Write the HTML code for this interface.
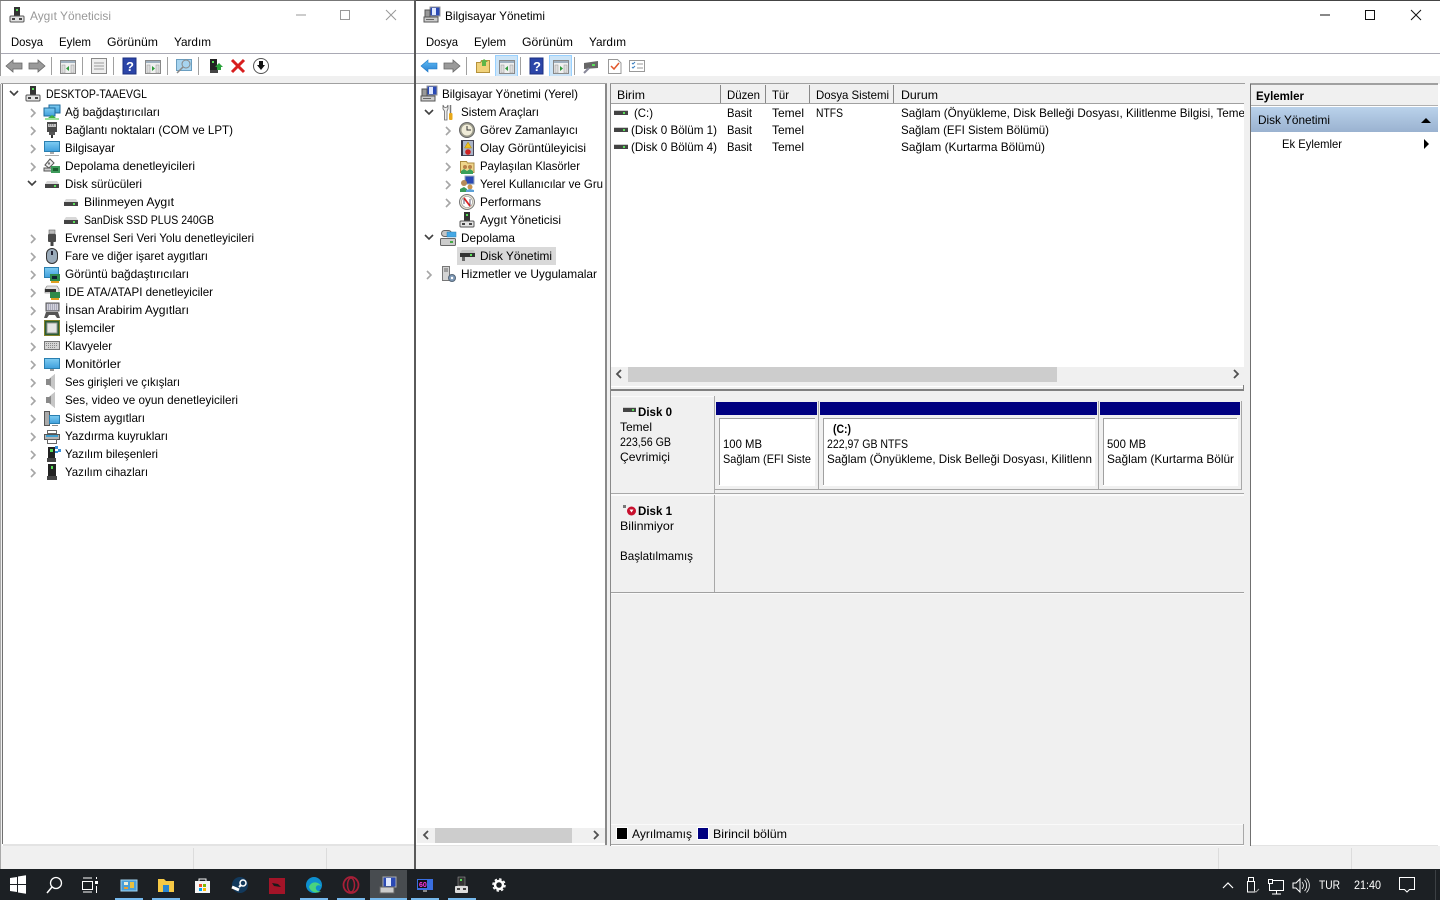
<!DOCTYPE html>
<html lang="tr"><head><meta charset="utf-8"><title>Bilgisayar Yönetimi</title>
<style>
html,body{margin:0;padding:0;background:#fff;overflow:hidden}
svg{display:block}
text{font-family:"Liberation Sans","DejaVu Sans",sans-serif;font-size:12px;fill:#000;white-space:pre}
.b{font-weight:bold}
</style></head><body>
<svg width="1440" height="900" viewBox="0 0 1440 900" xmlns="http://www.w3.org/2000/svg">
<defs>
<linearGradient id="ga" x1="0" y1="0" x2="0" y2="1"><stop offset="0" stop-color="#bad2eb"/><stop offset="1" stop-color="#9ab2d0"/></linearGradient>
<linearGradient id="gb" x1="0" y1="0" x2="0" y2="1"><stop offset="0" stop-color="#5fbdf5"/><stop offset="1" stop-color="#2a7fd0"/></linearGradient>
<linearGradient id="gm" x1="0" y1="0" x2="0" y2="1"><stop offset="0" stop-color="#7fcdf2"/><stop offset="1" stop-color="#3f9fdc"/></linearGradient>
<g id="ch"><path d="M0 0l4 4-4 4" fill="none" stroke="#a6a6a6" stroke-width="1.600"/></g>
<g id="ex"><path d="M0 0l4 4 4-4" fill="none" stroke="#404040" stroke-width="1.600"/></g>
<g id="dev"><rect x="5" y="0" width="6" height="9" fill="#333"/><rect x="7" y="2" width="2" height="2" fill="#5d5"/><rect x="1" y="9" width="14" height="6" rx="1" fill="#e2e2e2" stroke="#555"/><rect x="3" y="11" width="3" height="2" fill="#444"/><rect x="10" y="11" width="3" height="2" fill="#444"/></g>
<g id="comp"><rect x="6" y="0" width="10" height="9" fill="#2a49b5" stroke="#999"/><rect x="8" y="1" width="4" height="7" fill="#dfe8ff"/><rect x="1" y="3" width="5" height="7" fill="#999" stroke="#555"/><rect x="0" y="10" width="14" height="5" fill="#ccc" stroke="#555"/><rect x="2" y="12" width="8" height="1" fill="#666"/></g>
<g id="net"><rect x="5" y="0" width="11" height="8" fill="url(#gm)" stroke="#1e6a9c"/><rect x="0" y="3" width="11" height="8" fill="url(#gm)" stroke="#1e6a9c"/><rect x="1" y="13" width="14" height="2" fill="#9be09b"/><path d="M8 10l-4 3h8z" fill="#3fb23f"/></g>
<g id="port"><rect x="3" y="0" width="10" height="10" fill="#4a4a4a"/><rect x="4" y="2" width="8" height="3" fill="#c4c4c4"/><path d="M5 3h6" stroke="#666" stroke-dasharray="1 1"/><rect x="5" y="10" width="6" height="3" fill="#555"/><rect x="7" y="13" width="2" height="3" fill="#333"/></g>
<g id="pc"><rect x=".5" y=".5" width="15" height="10" fill="url(#gm)" stroke="#2a7fb0"/><rect x="6" y="11" width="4" height="2" fill="#aaa"/><rect x="1" y="14" width="14" height="1" fill="#aaa"/></g>
<g id="stor"><path d="M1 7l5-6 4 4-5 5z" fill="#f0f0f0" stroke="#555"/><circle cx="5" cy="5.500" r="1.200" fill="#777"/><rect x="0" y="10" width="8" height="3" fill="#ccc" stroke="#555"/><rect x="7" y="8" width="9" height="7" fill="#3d9a5a"/><rect x="9" y="10" width="5" height="3" fill="#1b5e30"/></g>
<g id="disk"><path d="M1 8l2-3h10l2 3z" fill="#d8d8d8"/><rect x="1" y="8" width="14" height="4" fill="#444"/><rect x="10" y="9" width="2" height="2" fill="#5be05b"/></g>
<g id="usb"><rect x="5" y="0" width="6" height="4" fill="#bbb" stroke="#666" stroke-width=".6"/><rect x="4" y="4" width="8" height="8" rx="1" fill="#4a4a4a"/><rect x="6.500" y="12" width="3" height="4" fill="#444"/></g>
<g id="mouse"><rect x="2.500" y=".5" width="11" height="15" rx="5.500" fill="#9aabba" stroke="#333"/><rect x="7" y="3" width="2" height="4" fill="#223"/></g>
<g id="gpu"><rect x=".5" y=".5" width="14" height="10" fill="url(#gm)" stroke="#2a7fb0"/><rect x="6" y="7" width="10" height="7" fill="#2f8a4a"/><rect x="8" y="9" width="5" height="3" fill="#123"/><rect x="7" y="14" width="8" height="2" fill="#e0a020"/></g>
<g id="ide"><path d="M1 5l2-3h10l2 3v4H1z" fill="#e2e2e2" stroke="#777" stroke-width=".6"/><rect x="1" y="5" width="11" height="3" fill="#333"/><rect x="6" y="8" width="10" height="6" fill="#2f8a4a"/><rect x="7" y="14" width="8" height="2" fill="#e0a020"/></g>
<g id="hid"><rect x="2" y="0" width="13" height="8" fill="#aab" stroke="#555"/><path d="M3 2h11M3 4h11M3 6h11" stroke="#fff" stroke-dasharray="1 1"/><path d="M0 15l2-6h12l2 6h-3l-2-3H5l-2 3z" fill="#555"/></g>
<g id="cpu"><rect x="0" y="0" width="16" height="16" fill="#2c5d34"/><rect x=".5" y=".5" width="15" height="15" fill="none" stroke="#d9a520" stroke-dasharray="1 1"/><rect x="3" y="3" width="10" height="10" fill="#e5e5e5" stroke="#999"/></g>
<g id="kb"><rect x=".5" y="3.500" width="15" height="8" fill="#d4d4d4" stroke="#777"/><path d="M2 5.500h12M2 7.500h12M4 9.500h8" stroke="#888" stroke-dasharray="1 1"/></g>
<g id="mon"><rect x=".5" y=".5" width="15" height="10" fill="url(#gm)" stroke="#2a7fb0"/><rect x="6" y="11" width="4" height="2" fill="#999"/></g>
<g id="spk"><path d="M2 5h3l6-5v16l-6-5H2z" fill="#8a8a8a"/><path d="M7 3l4-3v16l-4-3z" fill="#c6c6c6"/></g>
<g id="sys"><rect x=".5" y=".5" width="5" height="14" fill="#aaa" stroke="#555"/><rect x="5.500" y="4.500" width="10" height="8" fill="url(#gm)" stroke="#2a7fb0"/><rect x="8" y="14" width="6" height="1" fill="#888"/></g>
<g id="prn"><rect x="3.500" y="1.500" width="9" height="3" fill="#fff" stroke="#666"/><rect x=".5" y="5.500" width="15" height="5" fill="#b5b5b5" stroke="#555"/><rect x="3.500" y="10.500" width="9" height="4" fill="#fff" stroke="#666"/><rect x="2" y="6" width="12" height="2" fill="#40a0d0"/></g>
<g id="sw"><rect x="3" y="1" width="7" height="11" fill="#222"/><rect x="5" y="3" width="3" height="3" fill="#5d5"/><rect x="2" y="12" width="9" height="4" fill="#444"/><rect x="10" y="0" width="3" height="3" fill="#3a8fd8"/><rect x="13" y="3" width="3" height="3" fill="#3a8fd8"/><rect x="10" y="5" width="3" height="2" fill="#3a8fd8"/></g>
<g id="swd"><rect x="4" y="0" width="8" height="12" fill="#222"/><rect x="7" y="2" width="2" height="3" fill="#5d5"/><rect x="3" y="12" width="10" height="4" fill="#444"/></g>
<g id="back"><path d="M0 7l7-6v3h9v6H7v3z" fill="#9a9a9a" stroke="#666" stroke-width=".8"/></g>
<g id="fwd"><path d="M16 7l-7-6v3H0v6h9v3z" fill="#9a9a9a" stroke="#666" stroke-width=".8"/></g>
<g id="win1"><rect x=".5" y=".5" width="15" height="13" fill="#f0f0f0" stroke="#888"/><rect x="1" y="1" width="14" height="2" fill="#9fb0bf"/><rect x="2" y="5" width="3" height="8" fill="#ddd" stroke="#999" stroke-width=".5"/><rect x="11" y="5" width="3" height="8" fill="#ddd" stroke="#999" stroke-width=".5"/><path d="M9 6v5L6 8.500z" fill="#2e9a3a"/></g>
<g id="win2"><rect x=".5" y=".5" width="15" height="13" fill="#f0f0f0" stroke="#888"/><rect x="1" y="1" width="14" height="2" fill="#9fb0bf"/><rect x="2" y="5" width="3" height="8" fill="#ddd" stroke="#999" stroke-width=".5"/><rect x="11" y="5" width="3" height="8" fill="#ddd" stroke="#999" stroke-width=".5"/><path d="M7 6v5l3-2.500z" fill="#2e9a3a"/></g>
<g id="help"><rect x="0" y="0" width="13" height="16" fill="#2b45a8" stroke="#1b2f80"/><text x="3" y="13" style="font-size:13px;font-weight:bold;fill:#fff">?</text></g>
<g id="sb"><path d="M0 0l4 4-4 4" fill="none" stroke="#505050" stroke-width="1.800"/></g>
<g id="sbl"><path d="M4 0L0 4l4 4" fill="none" stroke="#505050" stroke-width="1.800"/></g>
</defs>

<rect width="1440" height="900" fill="#fff"/>

<!-- LEFT WINDOW -->
<rect x="0" y="0" width="414" height="869" fill="#fff"/>
<rect x="0" y="0" width="1" height="869" fill="#999"/>
<rect x="0" y="0" width="414" height="1" fill="#777"/>
<use href="#dev" x="9" y="7"/>
<text x="30" y="20" style="fill:#999" textLength="81" lengthAdjust="spacingAndGlyphs">Aygıt Yöneticisi</text>
<path d="M296 15h10" stroke="#999"/><rect x="340.500" y="10.500" width="9" height="9" fill="none" stroke="#999"/><path d="M386 10l10 10M396 10l-10 10" stroke="#999"/>
<text x="11" y="46" textLength="32" lengthAdjust="spacingAndGlyphs">Dosya</text>
<text x="59" y="46" textLength="32" lengthAdjust="spacingAndGlyphs">Eylem</text>
<text x="107" y="46" textLength="51" lengthAdjust="spacingAndGlyphs">Görünüm</text>
<text x="174" y="46" textLength="37" lengthAdjust="spacingAndGlyphs">Yardım</text>
<rect x="1" y="53" width="413" height="1" fill="#a9a9b4"/>
<use href="#back" x="6" y="59"/><use href="#fwd" x="29" y="59"/>
<rect x="51" y="57" width="1" height="18" fill="#a0a0a0"/>
<use href="#win1" x="60" y="60"/>
<rect x="82" y="57" width="1" height="18" fill="#a0a0a0"/>
<rect x="91.500" y="58.500" width="15" height="15" fill="#eee" stroke="#888"/><path d="M94 63h10M94 66h10M94 69h10" stroke="#999"/>
<rect x="113" y="57" width="1" height="18" fill="#a0a0a0"/>
<use href="#help" x="123" y="58"/>
<use href="#win2" x="145" y="60"/>
<rect x="167" y="57" width="1" height="18" fill="#a0a0a0"/>
<rect x="176.500" y="59.500" width="15" height="11" fill="#a7d4ef" stroke="#6a9ec0"/><circle cx="186" cy="64" r="4" fill="none" stroke="#888"/><path d="M183 67l-6 6" stroke="#888" stroke-width="1.500"/>
<rect x="198" y="57" width="1" height="18" fill="#a0a0a0"/>
<rect x="210" y="59" width="7" height="11" fill="#222"/><rect x="212" y="61" width="2" height="2" fill="#5d5"/><rect x="210" y="70" width="8" height="3" fill="#444"/><path d="M219 63l4 4h-2v3h-4v-3h-2z" fill="#2aa23a"/>
<path d="M232 60l12 12M244 60l-12 12" stroke="#d81e1e" stroke-width="3"/>
<circle cx="261" cy="66" r="7.500" fill="#fff" stroke="#555"/><path d="M259 61h4v4h2l-4 5-4-5h2z" fill="#111"/>
<rect x="0" y="76" width="414" height="8" fill="#f0f0f0"/>
<rect x="1" y="83" width="413" height="1" fill="#a0a0a0"/>
<rect x="2" y="84" width="1" height="760" fill="#707070"/>
<rect x="3" y="844" width="411" height="2" fill="#e3e3e3"/>
<rect x="0" y="846" width="414" height="23" fill="#f0f0f0"/>
<rect x="193" y="848" width="1" height="21" fill="#dcdcdc"/><rect x="326" y="848" width="1" height="21" fill="#dcdcdc"/>
<rect x="0" y="84" width="2" height="785" fill="#f0f0f0"/><rect x="0" y="84" width="1" height="785" fill="#aaa"/>

<use href="#ex" x="10" y="91"/><use href="#dev" x="25" y="86"/>
<text x="46" y="98" textLength="101" lengthAdjust="spacingAndGlyphs">DESKTOP-TAAEVGL</text>

<use href="#ch" x="31" y="109"/><use href="#net" x="44" y="105"/><text x="65" y="116" textLength="95" lengthAdjust="spacingAndGlyphs">Ağ bağdaştırıcıları</text>
<use href="#ch" x="31" y="127"/><use href="#port" x="44" y="122"/><text x="65" y="134" textLength="168" lengthAdjust="spacingAndGlyphs">Bağlantı noktaları (COM ve LPT)</text>
<use href="#ch" x="31" y="145"/><use href="#pc" x="44" y="141"/><text x="65" y="152" textLength="50" lengthAdjust="spacingAndGlyphs">Bilgisayar</text>
<use href="#ch" x="31" y="163"/><use href="#stor" x="44" y="158"/><text x="65" y="170" textLength="130" lengthAdjust="spacingAndGlyphs">Depolama denetleyicileri</text>
<use href="#ex" x="28" y="181"/><use href="#disk" x="44" y="176"/><text x="65" y="188" textLength="77" lengthAdjust="spacingAndGlyphs">Disk sürücüleri</text>
<use href="#disk" x="63" y="194"/><text x="84" y="206" textLength="90" lengthAdjust="spacingAndGlyphs">Bilinmeyen Aygıt</text>
<use href="#disk" x="63" y="212"/><text x="84" y="224" textLength="130" lengthAdjust="spacingAndGlyphs">SanDisk SSD PLUS 240GB</text>
<use href="#ch" x="31" y="235"/><use href="#usb" x="44" y="230"/><text x="65" y="242" textLength="189" lengthAdjust="spacingAndGlyphs">Evrensel Seri Veri Yolu denetleyicileri</text>
<use href="#ch" x="31" y="253"/><use href="#mouse" x="44" y="248"/><text x="65" y="260" textLength="143" lengthAdjust="spacingAndGlyphs">Fare ve diğer işaret aygıtları</text>
<use href="#ch" x="31" y="271"/><use href="#gpu" x="44" y="267"/><text x="65" y="278" textLength="124" lengthAdjust="spacingAndGlyphs">Görüntü bağdaştırıcıları</text>
<use href="#ch" x="31" y="289"/><use href="#ide" x="44" y="284"/><text x="65" y="296" textLength="148" lengthAdjust="spacingAndGlyphs">IDE ATA/ATAPI denetleyiciler</text>
<use href="#ch" x="31" y="307"/><use href="#hid" x="44" y="303"/><text x="65" y="314" textLength="124" lengthAdjust="spacingAndGlyphs">İnsan Arabirim Aygıtları</text>
<use href="#ch" x="31" y="325"/><use href="#cpu" x="44" y="320"/><text x="65" y="332" textLength="50" lengthAdjust="spacingAndGlyphs">İşlemciler</text>
<use href="#ch" x="31" y="343"/><use href="#kb" x="44" y="338"/><text x="65" y="350" textLength="47" lengthAdjust="spacingAndGlyphs">Klavyeler</text>
<use href="#ch" x="31" y="361"/><use href="#mon" x="44" y="358"/><text x="65" y="368" textLength="56" lengthAdjust="spacingAndGlyphs">Monitörler</text>
<use href="#ch" x="31" y="379"/><use href="#spk" x="44" y="374"/><text x="65" y="386" textLength="115" lengthAdjust="spacingAndGlyphs">Ses girişleri ve çıkışları</text>
<use href="#ch" x="31" y="397"/><use href="#spk" x="44" y="392"/><text x="65" y="404" textLength="173" lengthAdjust="spacingAndGlyphs">Ses, video ve oyun denetleyicileri</text>
<use href="#ch" x="31" y="415"/><use href="#sys" x="44" y="411"/><text x="65" y="422" textLength="80" lengthAdjust="spacingAndGlyphs">Sistem aygıtları</text>
<use href="#ch" x="31" y="433"/><use href="#prn" x="44" y="429"/><text x="65" y="440" textLength="103" lengthAdjust="spacingAndGlyphs">Yazdırma kuyrukları</text>
<use href="#ch" x="31" y="451"/><use href="#sw" x="45" y="446"/><text x="65" y="458" textLength="93" lengthAdjust="spacingAndGlyphs">Yazılım bileşenleri</text>
<use href="#ch" x="31" y="469"/><use href="#swd" x="44" y="464"/><text x="65" y="476" textLength="83" lengthAdjust="spacingAndGlyphs">Yazılım cihazları</text>

<!-- DIVIDER -->
<rect x="414" y="0" width="2" height="869" fill="#5a5a5a"/>

<!-- RIGHT WINDOW -->
<rect x="416" y="0" width="1024" height="1" fill="#444"/>
<use href="#comp" x="424" y="7"/>
<text x="445" y="20" textLength="100" lengthAdjust="spacingAndGlyphs">Bilgisayar Yönetimi</text>
<path d="M1320 15h10" stroke="#111"/><rect x="1365.500" y="10.500" width="9" height="9" fill="none" stroke="#111"/><path d="M1411 10l10 10M1421 10l-10 10" stroke="#111"/>
<text x="426" y="46" textLength="32" lengthAdjust="spacingAndGlyphs">Dosya</text>
<text x="474" y="46" textLength="32" lengthAdjust="spacingAndGlyphs">Eylem</text>
<text x="522" y="46" textLength="51" lengthAdjust="spacingAndGlyphs">Görünüm</text>
<text x="589" y="46" textLength="37" lengthAdjust="spacingAndGlyphs">Yardım</text>
<rect x="416" y="53" width="1024" height="1" fill="#a9a9b4"/>
<path d="M421 66l7-6v3h9v6h-9v3z" fill="url(#gb)" stroke="#1e7ac8" stroke-width=".6"/>
<use href="#fwd" x="444" y="59"/>
<rect x="466" y="57" width="1" height="18" fill="#a0a0a0"/>
<path d="M476.500 62.500h4l1-2h8v12h-13z" fill="#f1d27a" stroke="#b5923c"/><path d="M484 59l4 3h-2v4h-4v-4h-1z" fill="#5fb548"/>
<rect x="495.500" y="55.500" width="22" height="21" fill="#cce4f7" stroke="#99d1ff"/><use href="#win1" x="499" y="60"/>
<rect x="520" y="57" width="1" height="18" fill="#a0a0a0"/>
<use href="#help" x="530" y="58"/>
<rect x="549.500" y="55.500" width="22" height="21" fill="#cce4f7" stroke="#99d1ff"/><use href="#win2" x="553" y="60"/>
<rect x="574" y="57" width="1" height="18" fill="#a0a0a0"/>
<path d="M584 63l14-2v7l-14 1z" fill="#666"/><rect x="592" y="64" width="3" height="2" fill="#5be05b"/><path d="M589 68l-5 5" stroke="#889" stroke-width="2"/>
<path d="M608.500 59.500h9l3.500 3.500v10.500h-12.500z" fill="#fff" stroke="#999"/><path d="M611 66l3 3 5-6" fill="none" stroke="#e2572b" stroke-width="1.500"/>
<rect x="629.500" y="60.500" width="15" height="11" fill="#fff" stroke="#999"/><path d="M632 63l1 1 2-2M632 67l1 1 2-2" stroke="#3a7fc0" fill="none"/><path d="M637 64h6M637 68h6" stroke="#999"/>
<rect x="416" y="76" width="1024" height="8" fill="#f0f0f0"/>

<!-- tree -->
<rect x="416" y="83" width="191" height="1" fill="#a0a0a0"/>
<rect x="605" y="84" width="2" height="761" fill="#8a8a8a"/>
<rect x="416" y="845" width="191" height="1" fill="#e3e3e3"/>
<use href="#comp" x="421" y="86"/><text x="442" y="98" textLength="136" lengthAdjust="spacingAndGlyphs">Bilgisayar Yönetimi (Yerel)</text>
<use href="#ex" x="425" y="110"/>
<path d="M443 105v4l1.500 2v9h2.500v-9l1-2v-4l-1 2-1.500 .5-1.500-.5z" fill="#eee" stroke="#666" stroke-width=".8"/>
<path d="M450.500 105v8" stroke="#777" stroke-width="1.500"/><rect x="449" y="113" width="3.500" height="7" rx="1" fill="#e8a818"/>
<text x="461" y="116" textLength="78" lengthAdjust="spacingAndGlyphs">Sistem Araçları</text>
<use href="#ch" x="446" y="127"/><circle cx="467" cy="130" r="7.500" fill="#9a9a8a" stroke="#666"/><circle cx="467" cy="130" r="5.500" fill="#f0ecd8"/><path d="M467 126v4h4" fill="none" stroke="#333"/><text x="480" y="134" textLength="98" lengthAdjust="spacingAndGlyphs">Görev Zamanlayıcı</text>
<use href="#ch" x="446" y="145"/><rect x="461.500" y="140.500" width="12" height="15" fill="#aab4c8" stroke="#445"/><rect x="461" y="141" width="2" height="15" fill="#334"/><path d="M468 142l3.500 6h-7z" fill="#f0c020" stroke="#a80" stroke-width=".5"/><circle cx="468" cy="152" r="2.800" fill="#c22"/><text x="480" y="152" textLength="106" lengthAdjust="spacingAndGlyphs">Olay Görüntüleyicisi</text>
<use href="#ch" x="446" y="163"/><path d="M460.500 172.500v-11h6l1 1.500h6.500v9.500z" fill="#f0d68c" stroke="#aa8a40"/><circle cx="465" cy="167" r="2" fill="#b8824a"/><circle cx="470" cy="167" r="2" fill="#b8824a"/><path d="M461 174v-3l3-2 3 2 3-2 3 2v3z" fill="#3aa05a"/><text x="480" y="170" textLength="100" lengthAdjust="spacingAndGlyphs">Paylaşılan Klasörler</text>
<use href="#ch" x="446" y="181"/><rect x="465" y="176" width="9" height="8" fill="#2a49b5" stroke="#9ab"/><circle cx="464" cy="183" r="3" fill="#b58a58"/><path d="M460 192v-3l4-2 3 2v3z" fill="#3a9a5a"/><circle cx="470" cy="187" r="2.500" fill="#c8934e"/><path d="M466 192v-2l4-1 4 1v2z" fill="#5aa0d8"/><text x="480" y="188" textLength="123" lengthAdjust="spacingAndGlyphs">Yerel Kullanıcılar ve Gru</text>
<use href="#ch" x="446" y="199"/><circle cx="467" cy="202" r="7.500" fill="#e8e4d4" stroke="#777"/><circle cx="467" cy="202" r="5.500" fill="#fff" stroke="#999" stroke-width=".6"/><path d="M464 198l6 8" stroke="#d22" stroke-width="1.800"/><path d="M464 204v-5M470 205v-6" stroke="#335" stroke-width=".8"/><text x="480" y="206" textLength="61" lengthAdjust="spacingAndGlyphs">Performans</text>
<use href="#dev" x="459" y="212"/><text x="480" y="224" textLength="81" lengthAdjust="spacingAndGlyphs">Aygıt Yöneticisi</text>
<use href="#ex" x="425" y="235"/><rect x="441.500" y="230.500" width="10" height="6" rx="3" fill="#c6c6c6" stroke="#666"/><rect x="440.500" y="238.500" width="15" height="7" rx="1" fill="#ccc" stroke="#666"/><rect x="447" y="232" width="9" height="5" fill="#45a8e5" stroke="#2a7fb0" stroke-width=".5"/><rect x="450" y="241" width="3" height="2" fill="#4a4"/><text x="461" y="242" textLength="54" lengthAdjust="spacingAndGlyphs">Depolama</text>
<rect x="457" y="247" width="99" height="18" fill="#d9d9d9"/>
<path d="M460 253l2-3h12l1 3z" fill="#c4c4c4"/><rect x="460" y="253" width="15" height="4" fill="#333"/><rect x="470" y="254" width="2" height="2" fill="#5be05b"/><rect x="462" y="257" width="3" height="4" fill="#666"/><text x="480" y="260" textLength="72" lengthAdjust="spacingAndGlyphs">Disk Yönetimi</text>
<use href="#ch" x="427" y="271"/><rect x="442.500" y="266.500" width="7" height="14" fill="#d4d4d4" stroke="#777"/><path d="M444 269h4M444 271h4" stroke="#666"/><circle cx="452" cy="278" r="3.500" fill="#7f9ab8" stroke="#567"/><circle cx="452" cy="278" r="1.200" fill="#fff"/><text x="461" y="278" textLength="136" lengthAdjust="spacingAndGlyphs">Hizmetler ve Uygulamalar</text>
<rect x="417" y="828" width="188" height="15" fill="#f0f0f0"/>
<rect x="435" y="828" width="137" height="15" fill="#cdcdcd"/>
<use href="#sbl" x="424" y="831"/><use href="#sb" x="594" y="831"/>

<!-- middle -->
<rect x="607" y="84" width="3" height="762" fill="#f0f0f0"/>
<rect x="610" y="83" width="635" height="1" fill="#a0a0a0"/>
<rect x="610" y="84" width="1" height="762" fill="#8a8a8a"/>
<rect x="611" y="84" width="633" height="20" fill="#f0f0f0"/>
<rect x="611" y="103" width="633" height="1" fill="#a0a0a0"/>
<rect x="720" y="85" width="1" height="18" fill="#888"/>
<rect x="765" y="85" width="1" height="18" fill="#888"/>
<rect x="809" y="85" width="1" height="18" fill="#888"/>
<rect x="893" y="85" width="1" height="18" fill="#888"/>
<text x="617" y="99" textLength="28" lengthAdjust="spacingAndGlyphs">Birim</text>
<text x="727" y="99" textLength="33" lengthAdjust="spacingAndGlyphs">Düzen</text>
<text x="772" y="99" textLength="17" lengthAdjust="spacingAndGlyphs">Tür</text>
<text x="816" y="99" textLength="73" lengthAdjust="spacingAndGlyphs">Dosya Sistemi</text>
<text x="901" y="99" textLength="37" lengthAdjust="spacingAndGlyphs">Durum</text>

<rect x="614" y="110" width="14" height="5" fill="#444"/><rect x="614" y="110" width="14" height="1" fill="#ccc"/><rect x="623" y="112" width="2" height="2" fill="#5be05b"/>
<text x="634" y="117" textLength="19" lengthAdjust="spacingAndGlyphs">(C:)</text>
<text x="727" y="117" textLength="25" lengthAdjust="spacingAndGlyphs">Basit</text>
<text x="772" y="117" textLength="32" lengthAdjust="spacingAndGlyphs">Temel</text>
<text x="816" y="117" textLength="27" lengthAdjust="spacingAndGlyphs">NTFS</text>
<text x="901" y="117" textLength="344" lengthAdjust="spacingAndGlyphs">Sağlam (Önyükleme, Disk Belleği Dosyası, Kilitlenme Bilgisi, Teme</text>
<rect x="614" y="127" width="14" height="5" fill="#444"/><rect x="614" y="127" width="14" height="1" fill="#ccc"/><rect x="623" y="129" width="2" height="2" fill="#5be05b"/>
<text x="631" y="134" textLength="86" lengthAdjust="spacingAndGlyphs">(Disk 0 Bölüm 1)</text>
<text x="727" y="134" textLength="25" lengthAdjust="spacingAndGlyphs">Basit</text>
<text x="772" y="134" textLength="32" lengthAdjust="spacingAndGlyphs">Temel</text>
<text x="901" y="134" textLength="148" lengthAdjust="spacingAndGlyphs">Sağlam (EFI Sistem Bölümü)</text>
<rect x="614" y="144" width="14" height="5" fill="#444"/><rect x="614" y="144" width="14" height="1" fill="#ccc"/><rect x="623" y="146" width="2" height="2" fill="#5be05b"/>
<text x="631" y="151" textLength="86" lengthAdjust="spacingAndGlyphs">(Disk 0 Bölüm 4)</text>
<text x="727" y="151" textLength="25" lengthAdjust="spacingAndGlyphs">Basit</text>
<text x="772" y="151" textLength="32" lengthAdjust="spacingAndGlyphs">Temel</text>
<text x="901" y="151" textLength="144" lengthAdjust="spacingAndGlyphs">Sağlam (Kurtarma Bölümü)</text>

<rect x="611" y="367" width="633" height="15" fill="#f0f0f0"/>
<rect x="628" y="367" width="429" height="15" fill="#cdcdcd"/>
<use href="#sbl" x="617" y="370"/><use href="#sb" x="1234" y="370"/>
<rect x="611" y="382" width="633" height="8" fill="#f0f0f0"/>
<rect x="611" y="386" width="633" height="1" fill="#fff"/>
<rect x="611" y="389" width="633" height="2" fill="#808080"/>
<rect x="1243" y="385" width="1" height="5" fill="#808080"/>

<!-- graph panel -->
<rect x="611" y="391" width="633" height="454" fill="#f0f0f0"/>
<rect x="611" y="396" width="103" height="1" fill="#fafafa"/>
<rect x="714" y="396" width="1" height="98" fill="#a8a8a8"/>
<rect x="611" y="493" width="633" height="1" fill="#a8a8a8"/>
<rect x="611" y="494" width="633" height="2" fill="#fafafa"/>
<rect x="714" y="495" width="1" height="98" fill="#a8a8a8"/>
<rect x="611" y="592" width="633" height="1" fill="#a0a0a0"/>
<rect x="611" y="593" width="633" height="1" fill="#fafafa"/>

<rect x="716" y="402" width="101" height="13" fill="#000080"/>
<rect x="820" y="402" width="277" height="13" fill="#000080"/>
<rect x="1100" y="402" width="140" height="13" fill="#000080"/>
<rect x="715" y="489" width="527" height="1" fill="#a8a8a8"/>
<rect x="818" y="401" width="1" height="88" fill="#a8a8a8"/>
<rect x="1098" y="401" width="1" height="88" fill="#a8a8a8"/>
<rect x="1241" y="401" width="1" height="88" fill="#a8a8a8"/>
<rect x="719" y="418" width="96" height="68" fill="#fff"/><path d="M719.500 485V418.500H815" fill="none" stroke="#a0a0a0"/>
<rect x="823" y="418" width="272" height="68" fill="#fff"/><path d="M823.500 485V418.500H1095" fill="none" stroke="#a0a0a0"/>
<rect x="1103" y="418" width="135" height="68" fill="#fff"/><path d="M1103.500 485V418.500H1237" fill="none" stroke="#a0a0a0"/>

<rect x="623" y="407" width="13" height="5" fill="#444"/><rect x="623" y="407" width="13" height="1" fill="#ccc"/><rect x="632" y="409" width="2" height="2" fill="#5be05b"/>
<text class="b" x="638" y="416" textLength="34" lengthAdjust="spacingAndGlyphs">Disk 0</text>
<text x="620" y="431" textLength="32" lengthAdjust="spacingAndGlyphs">Temel</text>
<text x="620" y="446" textLength="51" lengthAdjust="spacingAndGlyphs">223,56 GB</text>
<text x="620" y="461" textLength="50" lengthAdjust="spacingAndGlyphs">Çevrimiçi</text>
<rect x="623" y="505" width="3" height="3" fill="#777"/><circle cx="631.500" cy="511" r="4.500" fill="#c8102e"/><path d="M629.500 509.500l2 3 2-3z" fill="#fff"/>
<text class="b" x="638" y="515" textLength="34" lengthAdjust="spacingAndGlyphs">Disk 1</text>
<text x="620" y="530" textLength="54" lengthAdjust="spacingAndGlyphs">Bilinmiyor</text>
<text x="620" y="560" textLength="73" lengthAdjust="spacingAndGlyphs">Başlatılmamış</text>
<text x="723" y="448" textLength="39" lengthAdjust="spacingAndGlyphs">100 MB</text>
<text x="723" y="463" textLength="88" lengthAdjust="spacingAndGlyphs">Sağlam (EFI Siste</text>
<text class="b" x="833" y="433" textLength="18" lengthAdjust="spacingAndGlyphs">(C:)</text>
<text x="827" y="448" textLength="81" lengthAdjust="spacingAndGlyphs">222,97 GB NTFS</text>
<text x="827" y="463" textLength="265" lengthAdjust="spacingAndGlyphs">Sağlam (Önyükleme, Disk Belleği Dosyası, Kilitlenn</text>
<text x="1107" y="448" textLength="39" lengthAdjust="spacingAndGlyphs">500 MB</text>
<text x="1107" y="463" textLength="127" lengthAdjust="spacingAndGlyphs">Sağlam (Kurtarma Bölür</text>

<rect x="611" y="824" width="633" height="1" fill="#fafafa"/>
<rect x="611" y="844" width="633" height="1" fill="#a8a8a8"/>
<rect x="1243" y="824" width="1" height="21" fill="#a8a8a8"/>
<rect x="616" y="827" width="12" height="13" fill="#fff"/><rect x="617" y="828" width="10" height="11" fill="#000"/>
<rect x="697" y="827" width="12" height="13" fill="#fff"/><rect x="698" y="828" width="10" height="11" fill="#000080"/>
<text x="632" y="838" textLength="60" lengthAdjust="spacingAndGlyphs">Ayrılmamış</text>
<text x="713" y="838" textLength="74" lengthAdjust="spacingAndGlyphs">Birincil bölüm</text>

<!-- actions pane -->
<rect x="1244" y="84" width="6" height="762" fill="#f0f0f0"/>
<rect x="1250" y="83" width="188" height="2" fill="#a0a0a0"/>
<rect x="1250" y="84" width="1" height="762" fill="#707070"/>
<rect x="1251" y="85" width="187" height="20" fill="#f0f0f0"/>
<rect x="1251" y="105" width="187" height="1" fill="#b0b0b0"/>
<rect x="1251" y="107" width="187" height="25" fill="url(#ga)"/>
<text class="b" x="1256" y="100" textLength="48" lengthAdjust="spacingAndGlyphs">Eylemler</text>
<text x="1258" y="124" textLength="72" lengthAdjust="spacingAndGlyphs">Disk Yönetimi</text>
<path d="M1421 123l5-5 5 5z" fill="#000"/>
<text x="1282" y="148" textLength="60" lengthAdjust="spacingAndGlyphs">Ek Eylemler</text>
<path d="M1424 139l5 5-5 5z" fill="#000"/>
<rect x="1251" y="845" width="189" height="1" fill="#e3e3e3"/>
<rect x="1438" y="84" width="2" height="762" fill="#fff"/>

<!-- status -->
<rect x="416" y="846" width="1024" height="23" fill="#f0f0f0"/>
<rect x="1218" y="848" width="1" height="21" fill="#dcdcdc"/><rect x="1351" y="848" width="1" height="21" fill="#dcdcdc"/>

<!-- TASKBAR -->
<rect x="0" y="869" width="1440" height="31" fill="#1c2024"/>
<rect x="370" y="870" width="37" height="30" fill="#484c50"/>
<path d="M10 878l7-1v7h-7zM18 876.500l8-1.300v8.800h-8zM10 885h7v7l-7-1zM18 885h8v8.800l-8-1.300z" fill="#fff"/>
<circle cx="56" cy="883" r="5.500" fill="none" stroke="#fff" stroke-width="1.300"/><path d="M52 887l-5 6" stroke="#fff" stroke-width="1.500"/>
<path d="M83 878h9M83 892h9" stroke="#fff"/><rect x="82.500" y="881.500" width="10" height="8" fill="none" stroke="#fff"/><rect x="95" y="881" width="3" height="3" fill="#fff"/><path d="M96.500 877v2M96.500 886v7" stroke="#fff"/>
<!-- app icons -->
<rect x="121" y="880" width="16" height="11" fill="#4a9fd8" stroke="#a4d4f0"/><rect x="124" y="882" width="4" height="3" fill="#f0f0d8"/><rect x="130" y="882" width="4" height="6" fill="#e8c040"/><rect x="124" y="887" width="4" height="2" fill="#e8a030"/>
<path d="M158 879h6l2 2h8v11h-16z" fill="#f6c945"/><rect x="163" y="885" width="6" height="7" fill="#2a86d0"/>
<path d="M195 881h15v12h-15z" fill="#f5f5f5"/><path d="M199 881v-2h7v2" fill="none" stroke="#f5f5f5"/><rect x="199" y="884" width="3" height="3" fill="#f25022"/><rect x="203" y="884" width="3" height="3" fill="#7fba00"/><rect x="199" y="888" width="3" height="3" fill="#00a4ef"/><rect x="203" y="888" width="3" height="3" fill="#ffb900"/>
<circle cx="240" cy="885" r="8" fill="#12395c"/><circle cx="243" cy="883" r="3" fill="none" stroke="#fff" stroke-width="1.500"/><path d="M232 887l7 3" stroke="#fff" stroke-width="3"/><path d="M239 887l2-2" stroke="#fff" stroke-width="2"/>
<rect x="269" y="878" width="16" height="16" fill="#a31428"/><path d="M272 883l6 1 3 3-7-1z" fill="#1a1a1a"/>
<circle cx="314" cy="885" r="8" fill="#0e8fcf"/><path d="M309 887c2-6 9-6 12-1-3-2-6 0-5 3 1 2 3 3 5 2-3 3-10 2-12-4z" fill="#49d37f"/>
<ellipse cx="351" cy="885" rx="7.500" ry="8" fill="none" stroke="#a81f38" stroke-width="1.800"/><ellipse cx="351" cy="885" rx="3.500" ry="7" fill="none" stroke="#a81f38" stroke-width="1.500"/>
<rect x="383" y="877" width="13" height="10" fill="#2a49b5" stroke="#aaa"/><rect x="386" y="878" width="5" height="8" fill="#dfe8ff"/><rect x="380" y="887" width="14" height="6" fill="#ccc" stroke="#666"/>
<rect x="417" y="879" width="16" height="11" fill="#3a6fe0"/><rect x="418" y="880" width="9" height="8" fill="#111"/><text x="419" y="887" style="font-size:7px;font-weight:bold;fill:#ff38e8">60</text><rect x="423" y="890" width="4" height="2" fill="#888"/>
<rect x="458" y="877" width="7" height="9" fill="#333" stroke="#aaa" stroke-width=".5"/><rect x="460" y="879" width="2" height="2" fill="#5d5"/><rect x="455" y="886" width="13" height="7" rx="1" fill="#ddd"/><rect x="457" y="888" width="3" height="2" fill="#444"/><rect x="463" y="888" width="3" height="2" fill="#444"/>
<circle cx="499" cy="885" r="4" fill="none" stroke="#fff" stroke-width="2.500"/><circle cx="499" cy="885" r="6" fill="none" stroke="#fff" stroke-width="1.500" stroke-dasharray="2.500 2.200"/>
<rect x="115" y="898" width="28" height="2" fill="#76b9ed"/><rect x="152" y="898" width="28" height="2" fill="#76b9ed"/><rect x="300" y="898" width="28" height="2" fill="#76b9ed"/><rect x="337" y="898" width="28" height="2" fill="#76b9ed"/><rect x="370" y="898" width="37" height="2" fill="#76b9ed"/><rect x="411" y="898" width="28" height="2" fill="#76b9ed"/><rect x="448" y="898" width="28" height="2" fill="#76b9ed"/>
<!-- tray -->
<path d="M1223 888l5-5 5 5" fill="none" stroke="#fff" stroke-width="1.200"/>
<path d="M1248.500 877.500h5v4h-5zM1247.500 881.500h7v10.500h-7z" fill="none" stroke="#fff"/><path d="M1254 891l2 1 3-3" fill="none" stroke="#aaa"/>
<rect x="1269.500" y="880.500" width="14" height="10" fill="none" stroke="#fff"/><rect x="1268.500" y="879.500" width="4" height="4" fill="#1c2024" stroke="#fff"/><path d="M1276.500 891v3M1272 894h9" stroke="#fff"/>
<path d="M1293 883h3l4-4v13l-4-4h-3z" fill="none" stroke="#fff"/><path d="M1302 882a5 5 0 0 1 0 7M1304.500 880a8 8 0 0 1 0 11M1306.500 878.500a10 10 0 0 1 0 14" fill="none" stroke="#fff" stroke-width=".8"/>
<text x="1319" y="889" style="fill:#fff" textLength="21" lengthAdjust="spacingAndGlyphs">TUR</text>
<text x="1354" y="889" style="fill:#fff" textLength="27" lengthAdjust="spacingAndGlyphs">21:40</text>
<path d="M1399.500 877.500h15v12h-5l-2.500 2.500-2.500-2.500h-5z" fill="none" stroke="#fff"/>
<rect x="1435" y="870" width="1" height="30" fill="#3c4044"/>
</svg>
</body></html>
